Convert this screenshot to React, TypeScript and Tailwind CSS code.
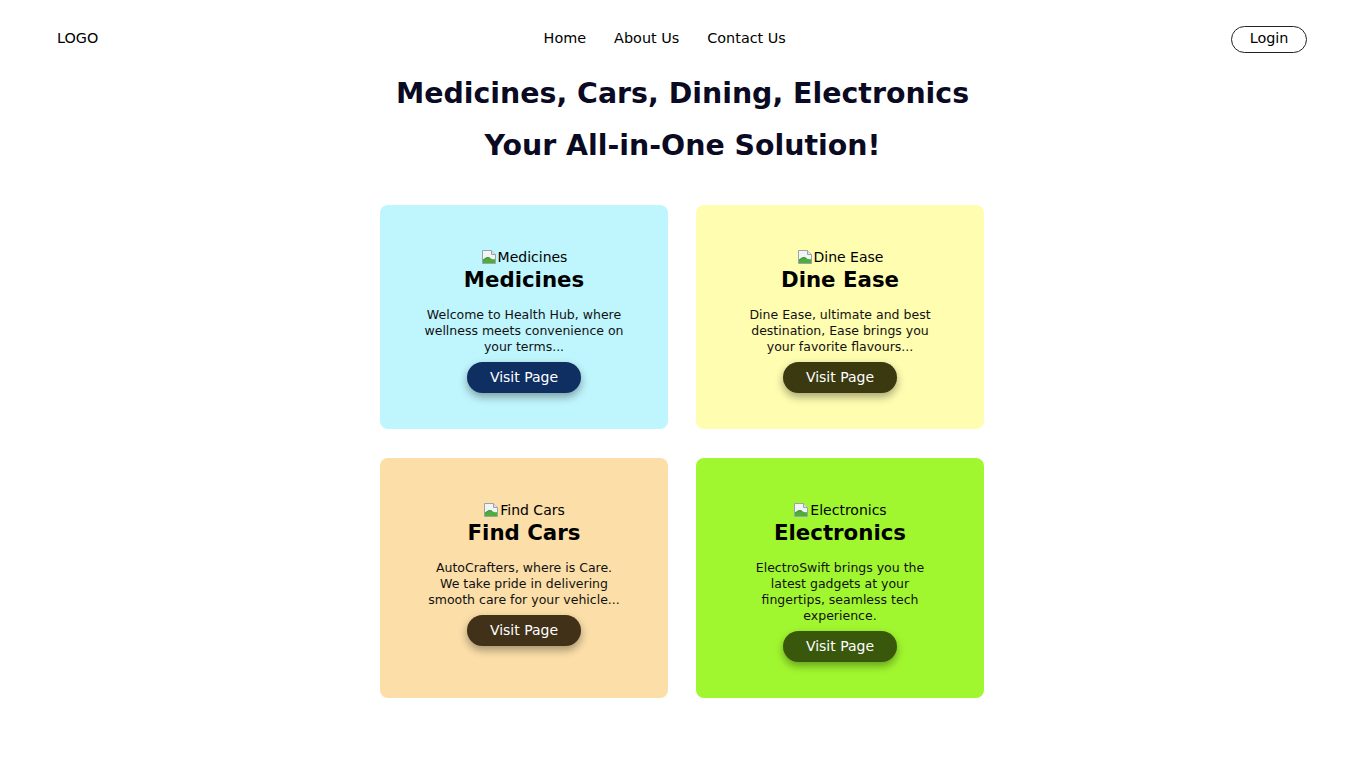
import React from "react";

const font = { fontFamily: '"DejaVu Sans", Verdana, sans-serif' };

function BrokenImg() {
  return (
    <svg width="16" height="16" viewBox="0 0 16 16" className="inline-block mr-[1px]">
      <path d="M1.5 1.5 H10.5 L14.5 5.5 V14.5 H1.5 Z" fill="#f2f4f5" stroke="#9aa3a8" strokeWidth="1" />
      <path d="M10.5 1.5 V5.5 H14.5" fill="#dfe3e5" stroke="#9aa3a8" strokeWidth="1" />
      <path d="M2 14 L2 11 Q6 7 9 9 Q12 11 14 10 L14 14 Z" fill="#4caf3a" />
      <path d="M2 11 Q6 7 9 9" fill="none" stroke="#2e7d32" strokeWidth="0.8" />
    </svg>
  );
}

type Card = { title: string; desc: React.ReactNode; bg: string; btn: string };

function ServiceCard({ title, desc, bg, btn }: Card) {
  return (
    <div className={`${bg} rounded-[8px] pt-[43px] pb-[36px] flex flex-col items-center`}>
      <div className="h-[18px] flex items-center text-[14px] text-black leading-none">
        <BrokenImg />
        <span>{title}</span>
      </div>
      <h2 className="text-[21.3px] font-bold text-black leading-[26px] mt-[1px]">{title}</h2>
      <p className="w-[70%] text-center text-[12.5px] leading-[16px] text-[#111] mt-[14px]">{desc}</p>
      <button
        className={`${btn} mt-[7px] h-[31px] px-[23px] rounded-full text-white text-[14px] flex items-center shadow-[0_4px_8px_rgba(0,0,0,0.35)]`}
      >
        Visit Page
      </button>
    </div>
  );
}

export default function App() {
  const cards: Card[] = [
    {
      title: "Medicines",
      desc: "Welcome to Health Hub, where wellness meets convenience on your terms...",
      bg: "bg-[#bff5fd]",
      btn: "bg-[#0f2f63]",
    },
    {
      title: "Dine Ease",
      desc: "Dine Ease, ultimate and best destination, Ease brings you your favorite flavours...",
      bg: "bg-[#fffdaf]",
      btn: "bg-[#3b390f]",
    },
    {
      title: "Find Cars",
      desc: (
        <>
          AutoCrafters, where is Care.
          <br />
          We take pride in delivering smooth care for your vehicle...
        </>
      ),
      bg: "bg-[#fbdea8]",
      btn: "bg-[#403118]",
    },
    {
      title: "Electronics",
      desc: "ElectroSwift brings you the latest gadgets at your fingertips, seamless tech experience.",
      bg: "bg-[#a1f72f]",
      btn: "bg-[#39580c]",
    },
  ];
  return (
    <div className="min-h-[768px] bg-white" style={font}>
      <header className="h-[67px] pt-[11px] pl-[57px] pr-[58px] flex items-center justify-between text-[14.4px] text-black">
        <div>LOGO</div>
        <nav className="flex gap-[28px]">
          <a>Home</a>
          <a>About Us</a>
          <a>Contact Us</a>
        </nav>
        <button className="h-[27px] px-[17.5px] border border-[#222] rounded-full text-[14.4px] flex items-center">
          Login
        </button>
      </header>
      <h1 className="mt-[1px] text-center text-[28.4px] font-bold leading-[52px] text-[#0a0a23]">
        Medicines, Cars, Dining, Electronics
        <br />
        Your All-in-One Solution!
      </h1>
      <div className="mt-[33px] pr-[1px] grid grid-cols-[288px_288px] gap-x-[28px] gap-y-[29px] justify-center">
        {cards.map((c) => (
          <ServiceCard key={c.title} {...c} />
        ))}
      </div>
    </div>
  );
}
